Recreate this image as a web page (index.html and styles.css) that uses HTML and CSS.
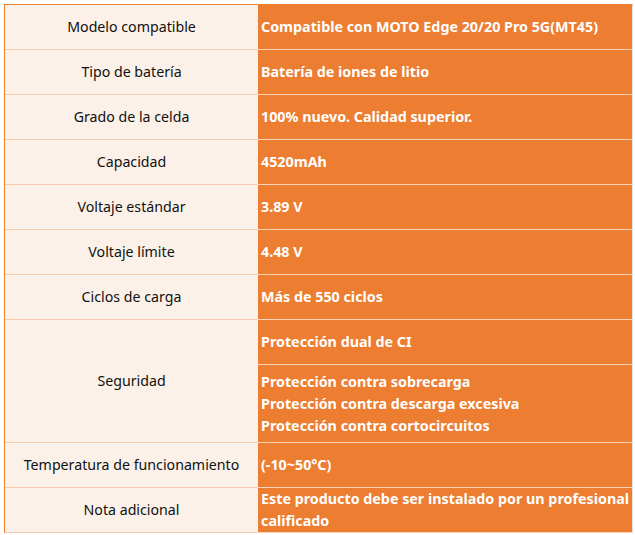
FILE: index.html
```html
<!DOCTYPE html>
<html lang="es">
<head>
<meta charset="utf-8">
<title>Especificaciones</title>
<link rel="stylesheet" href="styles.css">
</head>
<body>
<div class="sheet">
  <div class="spec">
    <div class="label">Modelo compatible</div>
    <div class="value">Compatible con MOTO Edge 20/20 Pro 5G(MT45)</div>

    <div class="label">Tipo de batería</div>
    <div class="value">Batería de iones de litio</div>

    <div class="label">Grado de la celda</div>
    <div class="value">100% nuevo. Calidad superior.</div>

    <div class="label">Capacidad</div>
    <div class="value">4520mAh</div>

    <div class="label">Voltaje estándar</div>
    <div class="value">3.89 V</div>

    <div class="label">Voltaje límite</div>
    <div class="value">4.48 V</div>

    <div class="label">Ciclos de carga</div>
    <div class="value">Más de 550 ciclos</div>

    <div class="label span2">Seguridad</div>
    <div class="value">Protección dual de CI</div>
    <div class="value">Protección contra sobrecarga<br>Protección contra descarga excesiva<br>Protección contra cortocircuitos</div>

    <div class="label">Temperatura de funcionamiento</div>
    <div class="value">(-10~50°C)</div>

    <div class="label">Nota adicional</div>
    <div class="value">Este producto debe ser instalado por un profesional calificado</div>
  </div>
</div>
</body>
</html>
```
FILE: styles.css
```css
html, body {
  margin: 0;
  padding: 0;
  background: #ffffff;
}

.sheet {
  padding: 4px 0 0 4px;
}

.spec {
  display: grid;
  grid-template-columns: 253px 374px;
  grid-template-rows: repeat(8, 45px) 78px 45px 45px;
  width: 627px;
  border-top: 1px solid #ed7d31;
  border-left: 1px solid #ed7d31;
  border-right: 1px solid #e2e2e2;
  font-family: "Noto Sans", "Open Sans", sans-serif;
  line-height: 22px;
}

.label {
  background: #fcf1e8;
  color: #111111;
  font-size: 14.2px;
  display: flex;
  align-items: center;
  justify-content: center;
  text-align: center;
  border-bottom: 1px solid #f8cbad;
}

.label.span2 {
  grid-row: span 2;
}

.value {
  background: #ed7d31;
  color: #ffffff;
  font-size: 14.3px;
  font-weight: 700;
  display: flex;
  align-items: center;
  padding-left: 3px;
  border-bottom: 1px solid #fbd3b6;
}
```
